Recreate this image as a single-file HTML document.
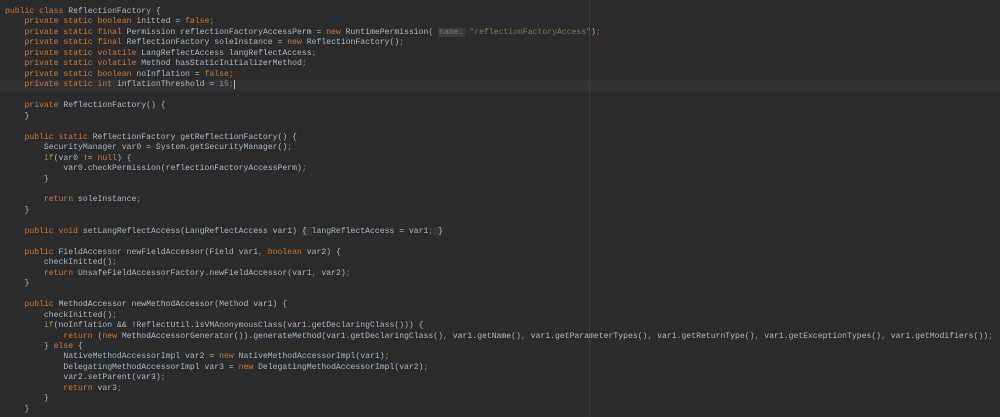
<!DOCTYPE html>
<html><head><meta charset="utf-8"><style>
html,body{margin:0;padding:0;background:#2b2b2b;width:1000px;height:417px;overflow:hidden}
.m{position:absolute;left:589px;top:0;width:1px;height:417px;background:#3d3d3d}
.cl{position:absolute;left:0;top:80px;width:1000px;height:10.5px;background:#323232}
pre{position:absolute;left:5px;top:7px;margin:0;font-family:"Liberation Mono",monospace;font-size:8.12px;line-height:10.47px;color:#a9b7c6;white-space:pre}
.k{color:#cc7832}.s{color:#6a8759}.n{color:#6897bb}
.h{color:#787878;background:#3b3b3b;border-radius:2px;padding:0 1px}
.f{background:#353535}
.cur{border-right:1px solid #bbb}
</style></head><body>
<div class="cl"></div><div class="m"></div>
<pre><span class="k">public class</span> ReflectionFactory {
    <span class="k">private static boolean</span> initted = <span class="k">false;</span>
    <span class="k">private static final</span> Permission reflectionFactoryAccessPerm = <span class="k">new</span> RuntimePermission( <span class="h">name:</span> <span class="s">"reflectionFactoryAccess"</span>)<span class="k">;</span>
    <span class="k">private static final</span> ReflectionFactory soleInstance = <span class="k">new</span> ReflectionFactory()<span class="k">;</span>
    <span class="k">private static volatile</span> LangReflectAccess langReflectAccess<span class="k">;</span>
    <span class="k">private static volatile</span> Method hasStaticInitializerMethod<span class="k">;</span>
    <span class="k">private static boolean</span> noInflation = <span class="k">false;</span>
    <span class="k">private static int</span> inflationThreshold = <span class="n">15</span><span class="k cur">;</span>

    <span class="k">private</span> ReflectionFactory() {
    }

    <span class="k">public static</span> ReflectionFactory getReflectionFactory() {
        SecurityManager var0 = System.getSecurityManager()<span class="k">;</span>
        <span class="k">if</span>(var0 != <span class="k">null</span>) {
            var0.checkPermission(reflectionFactoryAccessPerm)<span class="k">;</span>
        }

        <span class="k">return</span> soleInstance<span class="k">;</span>
    }

    <span class="k">public void</span> setLangReflectAccess(LangReflectAccess var1) <span class="f">{ </span>langReflectAccess = var1<span class="k">;</span><span class="f"> }</span>

    <span class="k">public</span> FieldAccessor newFieldAccessor(Field var1<span class="k">, boolean</span> var2) {
        checkInitted()<span class="k">;</span>
        <span class="k">return</span> UnsafeFieldAccessorFactory.newFieldAccessor(var1<span class="k">,</span> var2)<span class="k">;</span>
    }

    <span class="k">public</span> MethodAccessor newMethodAccessor(Method var1) {
        checkInitted()<span class="k">;</span>
        <span class="k">if</span>(noInflation &amp;&amp; !ReflectUtil.isVMAnonymousClass(var1.getDeclaringClass())) {
            <span class="k">return</span> (<span class="k">new</span> MethodAccessorGenerator()).generateMethod(var1.getDeclaringClass()<span class="k">,</span> var1.getName()<span class="k">,</span> var1.getParameterTypes()<span class="k">,</span> var1.getReturnType()<span class="k">,</span> var1.getExceptionTypes()<span class="k">,</span> var1.getModifiers())<span class="k">;</span>
        } <span class="k">else</span> {
            NativeMethodAccessorImpl var2 = <span class="k">new</span> NativeMethodAccessorImpl(var1)<span class="k">;</span>
            DelegatingMethodAccessorImpl var3 = <span class="k">new</span> DelegatingMethodAccessorImpl(var2)<span class="k">;</span>
            var2.setParent(var3)<span class="k">;</span>
            <span class="k">return</span> var3<span class="k">;</span>
        }
    }</pre>
</body></html>
